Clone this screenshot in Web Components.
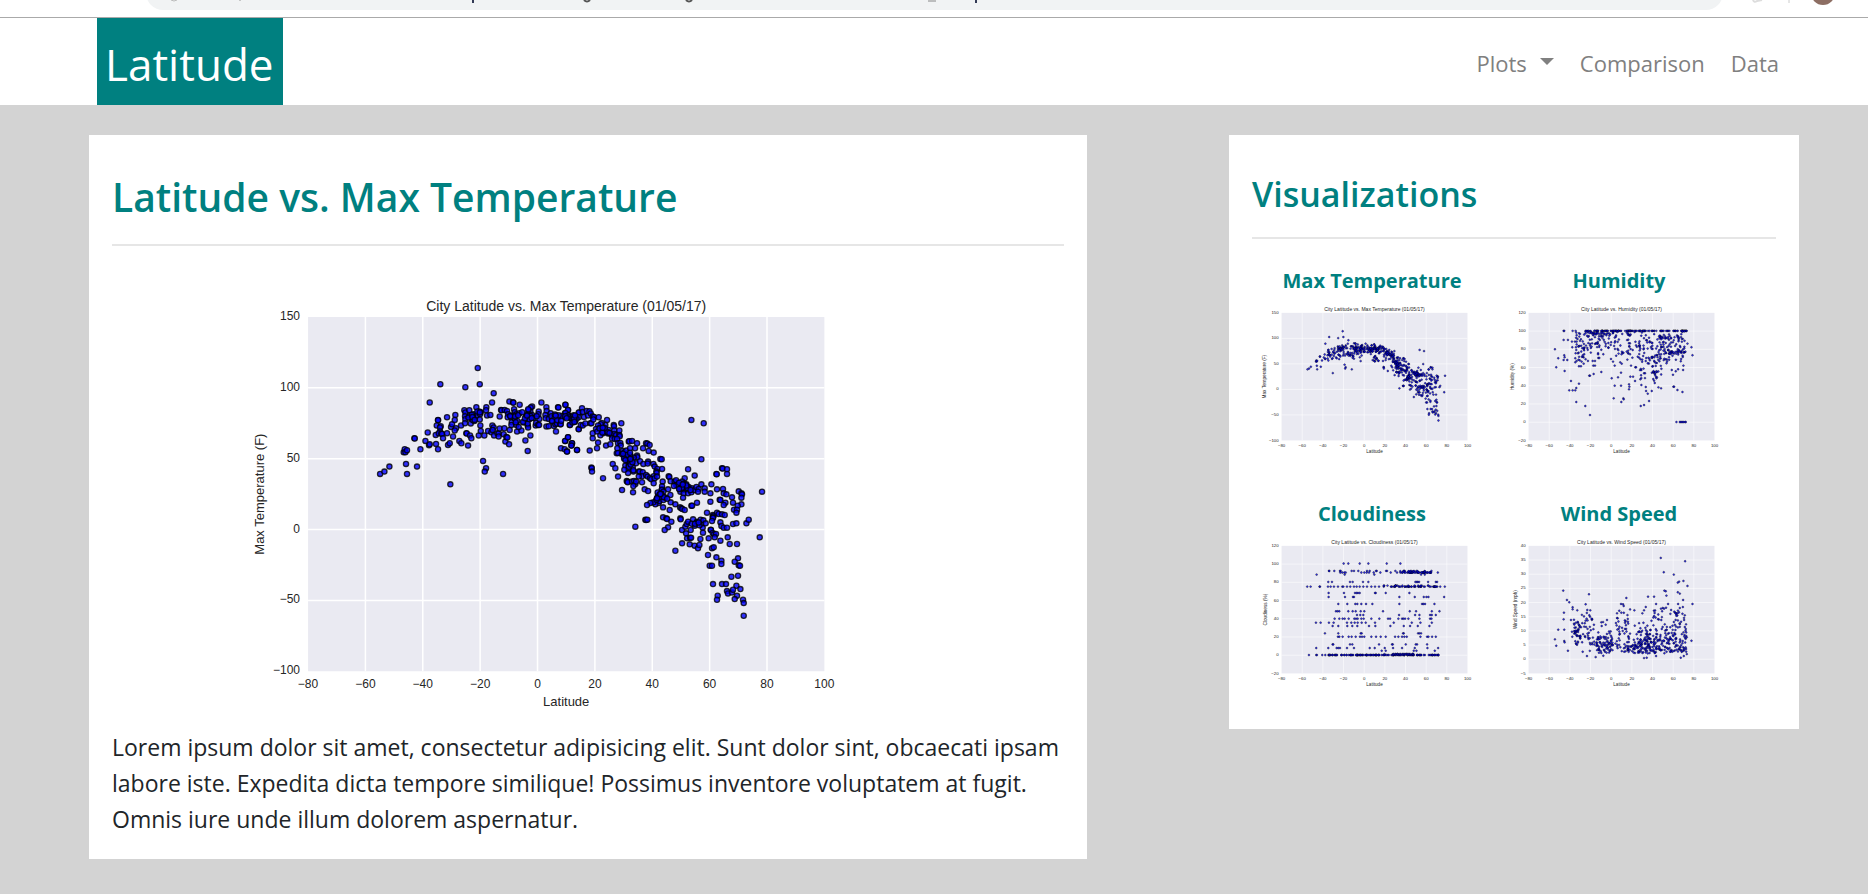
<!DOCTYPE html>
<html lang="en">
<head>
<meta charset="utf-8">
<title>Latitude</title>
<style>
  body { margin: 0; background: #d3d3d3; color: #212529; font: 23px/36px "Open Sans", "Segoe UI", sans-serif; }
</style>
</head>
<body>
<browser-strip></browser-strip>
<site-header></site-header>
<page-layout>
  <content-card>
    <card-title level="1">Latitude vs. Max Temperature</card-title>
    <feature-figure>
      <scatter-chart kind="temperature"></scatter-chart>
      <span slot="text">Lorem ipsum dolor sit amet, consectetur adipisicing elit. Sunt dolor sint, obcaecati ipsam labore iste. Expedita dicta tempore similique! Possimus inventore voluptatem at fugit. Omnis iure unde illum dolorem aspernatur.</span>
    </feature-figure>
  </content-card>
  <content-card slot="side">
    <card-title level="2">Visualizations</card-title>
    <thumb-grid>
      <chart-thumb><span slot="name">Max Temperature</span><scatter-chart kind="temperature"></scatter-chart></chart-thumb>
      <chart-thumb><span slot="name">Humidity</span><scatter-chart kind="humidity"></scatter-chart></chart-thumb>
      <chart-thumb><span slot="name">Cloudiness</span><scatter-chart kind="cloudiness"></scatter-chart></chart-thumb>
      <chart-thumb><span slot="name">Wind Speed</span><scatter-chart kind="wind"></scatter-chart></chart-thumb>
    </thumb-grid>
  </content-card>
</page-layout>

<script>
function define(name, html, setup) {
  const template = document.createElement('template');
  template.innerHTML = html;
  customElements.define(name, class extends HTMLElement {
    constructor() {
      super();
      this.attachShadow({ mode: 'open' }).append(template.content.cloneNode(true));
    }
    connectedCallback() { if (setup) setup(this, this.shadowRoot); }
  });
}

/* ---------- page furniture ---------- */
define('browser-strip', `
  <style>
    :host { display: flex; align-items: flex-start; height: 17px; overflow: hidden; background: #fff; border-bottom: 1px solid #aaa; }
    .address { flex: 1; height: 34px; margin: -24px 0 0 146px; border-radius: 17px; background: #f1f3f4; }
    .address svg { display: block; margin-top: 24px; }
    .tools { width: 145px; height: 17px; }
  </style>
  <div class="address"><svg width="100%" height="10" aria-hidden="true">
    <path d="M25 0q3 2 6 0" stroke="#bbb" fill="none"/><path d="M94 0v1" stroke="#999"/>
    <path d="M327 0v3M830 0v3" stroke="#333a55" stroke-width="2"/>
    <path d="M438 0q3 3 6 0M540 0q3 3 6 0" stroke="#555" stroke-width="2" fill="none"/>
    <path d="M782 1h8" stroke="#888" stroke-width="1"/>
  </svg></div>
  <svg class="tools" aria-hidden="true">
    <path d="M30 0q1 3 4 1l5-1" fill="none" stroke="#ddd" stroke-width="2"/>
    <path d="M66 0v3" stroke="#ccc"/>
    <circle cx="100" cy="-7" r="12" fill="#8d6e63"/>
  </svg>`);

define('site-header', `
  <style>
    :host { display: flex; justify-content: space-between; background: #fff; padding: 0 89px 0 97px; height: 87px; }
    .brand { display: flex; align-items: center; padding: 4px 9px 0 8px; background: #008080; color: #fff; font-size: 44px; line-height: 60px; text-decoration: none; }
    nav { display: flex; align-items: center; gap: 26px; padding-top: 3px; font-size: 22px; line-height: 36px; }
    nav a, nav button { color: #808080; text-decoration: none; }
    nav button { display: flex; align-items: center; gap: 13px; border: 0; padding: 0; background: none; font: inherit; }
    nav svg { display: block; margin-bottom: 4px; }
  </style>
  <a class="brand" href="#">Latitude</a>
  <nav>
    <button type="button" aria-haspopup="true">Plots<svg width="14" height="7" aria-hidden="true"><path d="M0 0h14l-7 7z" fill="#808080"/></svg></button>
    <a href="#comparison">Comparison</a>
    <a href="#data">Data</a>
  </nav>`);

define('page-layout', `
  <style>
    :host { display: grid; grid-template-columns: 998fr 570fr; gap: 142px; align-items: start; padding: 30px 69px 33px 89px; }
  </style>
  <slot></slot><slot name="side"></slot>`);

define('content-card', `
  <style>:host { display: block; background: #fff; padding: 22px 23px; }</style>
  <slot></slot>`);

define('card-title', `
  <style>
    :host { display: block; color: #008080; border-bottom: 2px solid #e6e6e6; }
    h1, h2 { margin: 0; font-weight: 600; }
    h1 { font-size: 39px; line-height: 52px; padding: 14px 0 21px; }
    h2 { font-size: 34px; line-height: 44px; padding: 15px 0 21px; }
  </style>`, (host, root) => {
  const heading = document.createElement('h' + host.getAttribute('level'));
  heading.append(document.createElement('slot'));
  root.append(heading);
});

define('feature-figure', `
  <style>
    :host { display: block; }
    figure { margin: 27px 18% 12px 12%; }
    p { margin: 0; }
  </style>
  <figure><slot></slot></figure>
  <p><slot name="text"></slot></p>`);

define('thumb-grid', `
  <style>
    :host { display: grid; grid-template-columns: 240fr 240fr 30fr; column-gap: 7px; padding: 25px 0 17px; row-gap: 40px; }
    ::slotted(:nth-child(odd)) { grid-column: 1; }
    ::slotted(:nth-child(even)) { grid-column: 2; }
  </style>
  <slot></slot>`);

define('chart-thumb', `
  <style>
    :host { display: block; }
    a { display: block; color: #008080; text-decoration: none; text-align: center; }
    h3 { margin: 0; font-size: 20px; line-height: 33px; font-weight: 700; }
  </style>
  <a href="#"><h3><slot name="name"></slot></h3><slot></slot></a>`);

/* ---------- data ---------- */
let seed = 1;
const rnd = () => ((seed = (seed * 16807) % 2147483647) / 2147483647);
const bell = () => (rnd() + rnd() + rnd() + rnd() - 2) / 1.2;
const pairs = text => text.trim().split(/\s+/).map(p => p.split(',').map(Number));
const place = (list, x0, y0, w, h) => list.map(([x, y]) => [(x - x0) / w, (y - y0) / h]);
const cloud = (n, x, y, sx, sy, slope = 0) => Array.from({ length: n }, () => {
  const d = bell() * sx;
  return [x + d, y + d * slope + bell() * sy];
});
const band = (n, a, b, y, sy) => Array.from({ length: n }, () => [a + rnd() * (b - a), y + bell() * sy]);

function temperature() {
  seed = 4711;
  const south = pairs(`420,583 433,576 448,561 491,518 494,509 496,518 501,512 498,553 501,583 531,561 523,476 524,477 541,509
    556,484 563,459 567,497 569,494 569,369 601,314 676,323 719,314 713,266 761,341 756,369 594,421 594,422 590,438 602,440
    600,444 600,456 587,466 596,461 604,462 606,463 609,476 588,493 594,509 621,413 621,461 624,496 629,491 631,614 633,442
    636,434 646,406 644,421 639,471 648,446 644,453 658,484 664,491 663,438 673,392 676,399 675,410 676,419 675,431 679,461
    680,462 684,498 688,392 690,408 692,432 694,416 698,414 690,468 694,476 701,404 703,424 709,383 711,408 718,396 722,398
    720,404 712,396 719,420 721,438 716,468 722,454 733,468 739,383 738,392 741,408 751,406 744,454 754,458 757,438 761,444
    758,451 762,468 772,461 776,462 779,447 779,411 776,471 783,391 785,392 794,391 801,394 804,404 793,446 791,464 796,486
    799,472 802,474 807,494 809,451 808,366 819,368 820,370 803,413 815,428 814,436 822,389 824,398 830,404 820,408 824,417
    832,424 838,401 839,376 829,436 831,456 844,453 836,442 729,544 738,566 734,576 789,583 863,514 856,483 871,468 852,429
    858,411 862,404 863,438 864,444 876,381 872,384 871,396 865,392 876,406 866,418 863,432 880,415 887,438 888,430 894,436
    896,396 895,404 898,418 897,436 904,369 890,410 919,383 920,394 916,406 917,416 919,441 926,418 926,440 932,401 934,410
    936,424 942,439 944,414 946,434 951,432 954,383 955,384 956,413 961,434 948,456 963,506 974,509 981,516 976,484 984,473
    996,491 994,498 1011,511 976,376 984,391 975,401 976,412 986,408 989,436 993,416 998,414 1004,426 1011,413 1016,448 1018,399`);
  const north = pairs(`16,376 24,391 16,400 15,412 25,408 28,413 30,436 34,416 40,412 44,426 38,420 15,484 24,473 36,491
    34,498 21,516 51,511 2,434 56,399 56,413 66,386 68,397 72,412 80,394 84,408 88,395 92,402 56,449 62,436 68,438 76,432
    91,431 94,431 98,411 102,412 100,420 116,413 89,513 111,506 114,489 98,476 98,461 94,564 95,566 96,576 129,596 158,553
    166,566 174,591 186,631 219,638 226,741 256,720 258,721 262,720 184,431 141,421 136,436 125,430 122,434 114,438 118,446
    126,446 108,448 112,456 129,461 121,467 146,451 148,461 144,462 138,498 151,494 161,436 162,440 163,453 178,453 157,468
    163,463 168,467 178,466 179,470 156,477 164,478 171,478 174,491 181,490 182,498 172,506 170,521 174,520 186,524 188,514
    193,518 199,513 194,528 196,532 206,486 208,485 216,484 231,491 225,506 210,506 249,506 258,491 262,492 269,496 266,514
    281,519 231,528 232,533 221,534 213,536 211,546 204,544 214,552 218,562 204,568 196,558 206,556 228,551 240,545 250,553
    264,546 263,552 280,553 284,561 292,568 306,568 289,576 290,580 301,538 305,539 236,576 239,576 248,578 246,590 236,591
    258,586 263,591 270,596 281,590 274,599 284,596 291,591 281,611 246,608 200,604 202,606 203,608 204,580 216,606 220,576
    222,604 226,613 228,606 220,619 254,629 264,634 308,606 306,628 326,590 328,592 332,605 344,606 350,612 354,616 348,602
    306,620 305,631 324,629 310,636 304,642 294,648 291,656 290,661 296,670 298,664 286,674 280,668 271,670 261,676 309,651
    310,661 331,646 332,668 309,683 329,691 346,674 360,683 364,686 367,688 374,691 309,713 319,716 321,718 334,726 324,743
    314,751 346,813 361,716 362,719 366,751 376,741 380,733 384,726 378,761 381,776 390,774 393,774 366,791 389,794 404,798
    414,806 418,796 421,778 399,719 392,751 404,738 411,726 414,728 422,720 424,734 430,722 428,744 437,731 429,759 374,596
    366,606 372,612 379,614 384,569 404,588 424,539 394,421 431,431 359,629 368,624 372,631 378,628 386,622 388,632 396,626
    361,636 371,641 384,641 369,654 394,638 404,631 409,622 416,628 414,636 424,614 434,626 434,636 411,669 394,678 396,678
    451,641 454,614 471,629 451,666 489,628 491,641 499,644 516,653 486,566 488,567 501,569 469,583 470,584 501,583 536,635
    544,641 546,644 544,654 606,636 479,660 481,661 496,669 491,676 519,669 544,674 533,678 522,690 531,690 529,699 441,699
    458,706 461,708 458,713 459,715 456,724 471,699 476,703 486,704 494,706 481,728 484,739 491,744 501,744 519,733 529,731
    559,731 566,720 599,773 452,750 453,751 458,760 462,764 468,763 446,776 464,773 503,773 481,783 509,793 531,793 456,806
    461,803 444,826 469,833 484,843 484,853 449,858 456,858 534,836 524,846 536,857 540,858 514,891 534,888 459,913 486,913
    498,913 529,918 541,928 501,934 504,941 516,938 519,930 531,948 524,958 473,948 471,960 549,960 551,970 551,1008`);
  return [
    ...place(south, 204, 113, 1549, 1061),
    ...place(north, -756, 113, 1549, 1061),
    ...place([...cloud(8, 695, 410, 24, 16), ...cloud(14, 850, 412, 50, 22), ...cloud(8, 950, 416, 40, 16)], 204, 113, 1549, 1061),
    ...place([...cloud(8, 50, 416, 40, 14), ...cloud(6, 135, 450, 30, 16, 0.6), ...cloud(16, 212, 550, 26, 30, 0.9),
      ...cloud(10, 298, 650, 18, 16), ...cloud(12, 372, 624, 26, 14, 0.3), ...cloud(4, 410, 735, 25, 16)], -756, 113, 1549, 1061)
  ];
}

function humidity() {
  seed = 99;
  const read = pairs(`193,178 197,232 203,205 221,196 222,202 219,210 230,210 222,243 219,150 232,150 219,123 221,123 246,123 255,123
    257,128 268,132 266,140 271,148 244,155 253,155 258,155 245,172 256,172 257,180 255,190 254,205 254,217 258,213 265,229 271,229
    273,215 279,221 241,273 236,301 246,301 254,301 257,294 265,281 257,336 284,348 298,375 296,257 309,252 332,246 298,257 308,227
    313,227 306,213 313,213 323,204 326,204 338,193 361,207 367,215 372,227 363,265 382,262 372,287 391,287 391,248 369,325 392,336
    398,325 399,328 415,283 416,290 415,298 419,260 427,260 433,273 393,221 410,209 421,227 434,232 436,232 450,348 460,345 475,333
    471,311 466,303 483,303 452,285 449,268 451,256 452,240 460,250 465,291 490,272 492,279 497,265 503,292 511,295 548,290 550,290
    560,300 575,306 602,172 605,196 590,161 557,396 567,396 570,396 573,396 576,396 579,396 583,396 585,396 543,240 555,244 562,238
    577,240 578,227 570,214`);
  const top = Array.from({ length: 110 }, () => [285 + rnd() * 303, 123]);
  const fill = [...band(38, 284, 372, 130, 8), ...band(44, 256, 304, 170, 42), ...band(34, 304, 372, 156, 32),
    ...band(52, 372, 450, 170, 52), ...band(78, 445, 512, 190, 68), ...band(76, 505, 584, 178, 54),
    ...band(18, 505, 576, 143, 4), ...band(24, 520, 584, 187, 5), ...band(14, 488, 500, 235, 40)];
  return place([...read, ...top, ...fill.filter(p => p[1] >= 122)], 114, 69, 557, 382);
}

function cloudiness() {
  seed = 7;
  const rows = {
    221: [310, 324, 358, 384, 439, 480], 254: [229, 313, 402, 553, 542],
    243: [266, 267, 282, 299, 301, 334, 341, 354, 380, 388, 407, 409, 437, 440, 465, 490, 493, 512, 529, 573],
    248: [300, 306, 312, 316, 363, 372, 379, 386, 400, 420, 451, 470, 592],
    276: [264, 275, 329, 337, 368, 384, 525, 529, 532, 536, 563, 586, 590],
    290: [201, 211, 238, 239, 263, 271, 281, 293, 306, 309, 320, 330, 341, 349, 358, 369, 380, 393, 404, 416, 430, 613],
    309: [265, 311, 344, 349, 353, 358, 404, 406, 436, 507], 321: [265, 314, 338, 341, 477, 523, 550, 558, 564, 611],
    342: [294, 321, 345, 351, 363, 377, 396, 477, 545, 549, 554, 582], 364: [287, 292, 297, 324, 337, 346, 361, 372, 428, 508, 527, 574, 597],
    375: [350, 360, 369, 476, 524, 537, 569, 574, 586], 386: [283, 297, 307, 313, 325, 342, 347, 352, 363, 370, 393, 417, 443, 449, 474, 485, 489, 494, 504, 537, 569, 573],
    398: [227, 241, 266, 280, 320, 333, 343, 352, 364, 376, 404, 460, 514, 540, 574], 408: [277, 294, 321, 336, 351, 386, 405, 450, 490, 509, 532, 567],
    430: [254, 294, 361, 364, 488, 490, 533, 537, 542], 440: [293, 297, 307, 325, 334, 346, 359, 365, 372, 393, 407, 421, 436, 464, 474, 485, 492, 499, 540, 560, 564, 575, 586],
    463: [277, 279, 329, 336, 416, 455, 457, 496, 526, 530, 560], 474: [228, 264, 289, 294, 299, 320, 341, 388, 403, 433, 458, 485, 523, 561, 593],
    482: [424, 436, 520, 528, 583], 495: [206, 228, 230, 246, 255, 265]
  };
  const out = Object.entries(rows).flatMap(([y, xs]) => xs.map(x => [x, +y]));
  const line = (n, a, b, y) => { for (let i = 0; i < n; i++) out.push([a + rnd() * (b - a), y]); };
  line(44, 480, 578, 248); line(12, 475, 560, 244); line(44, 440, 600, 290); line(16, 430, 580, 287);
  line(40, 265, 360, 495); line(100, 360, 595, 495); line(26, 425, 520, 492);
  return place(out, 124, 168, 557, 382);
}

function wind() {
  seed = 31;
  const read = pairs(`193,448 197,467 203,419 221,419 218,302 229,330 236,337 220,368 219,388 221,453 222,457 232,482 295,313 285,343
    246,352 246,358 241,390 260,361 290,360 299,361 298,380 244,425 245,440 332,397 349,390 333,408 510,204 583,214 519,247 549,254
    561,278 565,275 578,273 590,288 521,302 525,304 527,317 561,307 567,311 577,330 605,342 602,452 407,324 472,320 490,320 391,342
    397,343 399,348 431,361 379,370 392,368 465,351 496,342 532,342 562,342 567,354 516,354 520,356 514,364 541,360 455,370 460,361
    582,376 289,498 315,501 338,497 460,504 468,503 570,503 579,498 496,498 582,411 580,390 556,370`);
  /* Speeds pile up just above the calm line and thin out upward. */
  const gusts = (n, a, b, floor, mean) => Array.from({ length: n }, () =>
    [a + rnd() * (b - a), floor - mean / 2 * -Math.log(rnd() * rnd() + 1e-4)]);
  const fill = [...band(36, 250, 268, 425, 56), ...band(44, 268, 312, 425, 55), ...gusts(80, 316, 366, 492, 32),
    ...gusts(24, 366, 415, 489, 30), ...band(26, 374, 415, 405, 42), ...gusts(100, 412, 480, 492, 34),
    ...gusts(190, 460, 588, 493, 42), ...band(20, 480, 580, 385, 30)];
  return place([...read, ...fill.filter(p => p[1] > 345)], 114, 168, 557, 382);
}

const charts = {
  temperature: { name: 'Max Temperature', axis: 'Max Temperature (F)', min: -100, max: 150, step: 50, axisX: 38, points: temperature() },
  humidity: { name: 'Humidity', axis: 'Humidity (%)', min: -20, max: 120, step: 20, axisX: 43, points: humidity() },
  cloudiness: { name: 'Cloudiness', axis: 'Cloudiness (%)', min: -20, max: 120, step: 20, axisX: 43, points: cloudiness() },
  wind: { name: 'Wind Speed', axis: 'Wind Speed (mph)', min: -5, max: 40, step: 5, axisX: 50, points: wind() }
};

define('scatter-chart', `
  <style>
    :host { display: block; }
    svg { display: block; width: 100%; height: auto; font-family: "Liberation Sans", Arial, sans-serif; fill: #262626; }
    .title { font-size: 14px; } .label { font-size: 13px; } .tick { font-size: 12px; }
    .plot { fill: #eaeaf2; }
    .grid { stroke: #fff; stroke-width: 1.5; }
    .dots { fill: #00f; fill-opacity: .8; stroke: #000; stroke-opacity: .8; stroke-width: 1.3; }
  </style>`, (host, root) => {
  const c = charts[host.getAttribute('kind')];
  const L = 82, T = 44, W = 516, H = 354;
  const show = v => String(v).replace('-', '\u2212');
  let grid = '', ticks = '';
  for (let v = -80; v <= 100; v += 20) {
    const x = L + (v + 80) / 180 * W;
    if (v > -80 && v < 100) grid += `M${x} ${T}v${H}`;
    ticks += `<text x="${x}" y="${T + H + 17}" text-anchor="middle">${show(v)}</text>`;
  }
  for (let v = c.min; v <= c.max; v += c.step) {
    const y = T + (c.max - v) / (c.max - c.min) * H;
    if (v > c.min && v < c.max) grid += `M${L} ${y}h${W}`;
    ticks += `<text x="${L - 8}" y="${y + 3}" text-anchor="end">${show(v)}</text>`;
  }
  const dots = c.points.map(([x, y]) => `<circle cx="${(L + x * W).toFixed(1)}" cy="${(T + y * H).toFixed(1)}" r="2.6"/>`).join('');
  root.innerHTML += `<svg viewBox="0 0 666 444" role="img" aria-label="City Latitude vs. ${c.name}">
    <rect class="plot" x="${L}" y="${T}" width="${W}" height="${H}"/><path class="grid" d="${grid}"/>
    <g class="dots">${dots}</g><g class="tick">${ticks}</g>
    <text class="title" x="${L + W / 2}" y="${T - 6}" text-anchor="middle">City Latitude vs. ${c.name} (01/05/17)</text>
    <text class="label" x="${L + W / 2}" y="${T + H + 35}" text-anchor="middle">Latitude</text>
    <text class="label" transform="translate(${c.axisX} ${T + H / 2}) rotate(-90)" text-anchor="middle">${c.axis}</text>
  </svg>`;
});
</script>
</body>
</html>
